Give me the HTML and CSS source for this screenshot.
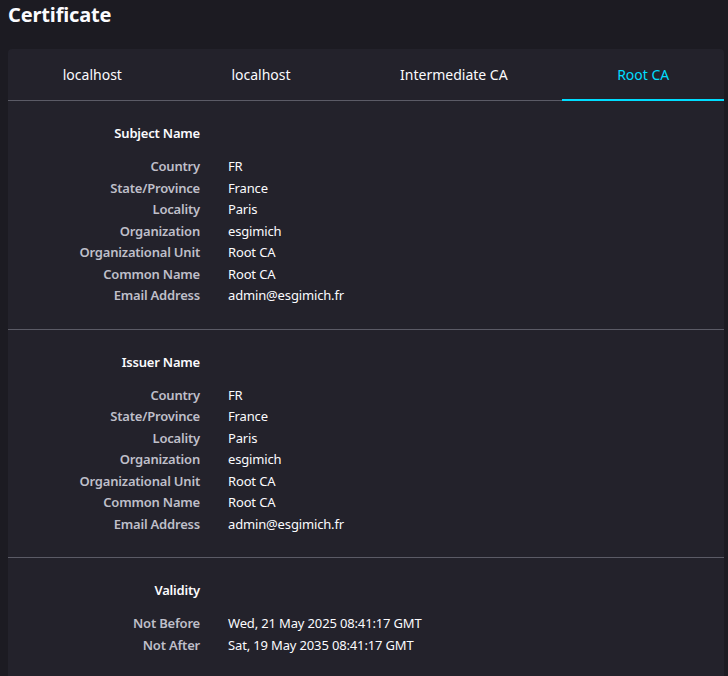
FILE: index.html
```html
<!DOCTYPE html>
<html lang="en">
<head>
<meta charset="utf-8">
<title>Certificate</title>
<link rel="stylesheet" href="styles.css">
</head>
<body>
<h1 class="title">Certificate</h1>
<div class="card">
  <div class="tabs">
    <div class="tab">localhost</div>
    <div class="tab">localhost</div>
    <div class="tab">Intermediate CA</div>
    <div class="tab active">Root CA</div>
  </div>
  <section class="section">
    <div class="row head"><div class="label">Subject Name</div><div class="value"></div></div>
    <div class="row"><div class="label">Country</div><div class="value">FR</div></div>
    <div class="row"><div class="label">State/Province</div><div class="value">France</div></div>
    <div class="row"><div class="label">Locality</div><div class="value">Paris</div></div>
    <div class="row"><div class="label">Organization</div><div class="value">esgimich</div></div>
    <div class="row"><div class="label">Organizational Unit</div><div class="value">Root CA</div></div>
    <div class="row"><div class="label">Common Name</div><div class="value">Root CA</div></div>
    <div class="row"><div class="label">Email Address</div><div class="value">admin@esgimich.fr</div></div>
  </section>
  <section class="section">
    <div class="row head"><div class="label">Issuer Name</div><div class="value"></div></div>
    <div class="row"><div class="label">Country</div><div class="value">FR</div></div>
    <div class="row"><div class="label">State/Province</div><div class="value">France</div></div>
    <div class="row"><div class="label">Locality</div><div class="value">Paris</div></div>
    <div class="row"><div class="label">Organization</div><div class="value">esgimich</div></div>
    <div class="row"><div class="label">Organizational Unit</div><div class="value">Root CA</div></div>
    <div class="row"><div class="label">Common Name</div><div class="value">Root CA</div></div>
    <div class="row"><div class="label">Email Address</div><div class="value">admin@esgimich.fr</div></div>
  </section>
  <section class="section">
    <div class="row head"><div class="label">Validity</div><div class="value"></div></div>
    <div class="row"><div class="label">Not Before</div><div class="value">Wed, 21 May 2025 08:41:17 GMT</div></div>
    <div class="row"><div class="label">Not After</div><div class="value">Sat, 19 May 2035 08:41:17 GMT</div></div>
  </section>
</div>
</body>
</html>
```
FILE: styles.css
```css
html, body {
  margin: 0;
  padding: 0;
  background: #1c1b22;
  color: #fbfbfe;
  font-family: "Noto Sans", sans-serif;
  height: 100%;
  overflow: hidden;
}
body {
  padding: 0 4px 0 8px;
}
.title {
  margin: 0;
  padding-top: 2px;
  height: 47px;
  font-size: 20px;
  font-weight: 700;
  line-height: 26px;
  letter-spacing: -0.15px;
}
.card {
  background: #23222b;
  border-radius: 4px;
}
.tabs {
  display: flex;
  border-bottom: 1px solid #5b5b66;
  height: 51px;
}
.tab {
  flex: 1 1 auto;
  display: flex;
  align-items: center;
  justify-content: center;
  font-size: 14px;
  color: #fbfbfe;
  border-bottom: 2px solid transparent;
  margin-bottom: -1px;
}
.tab.active {
  color: #00ddff;
  border-bottom-color: #00ddff;
}
.section {
  padding: 22px 0;
  border-bottom: 1px solid #5b5b66;
}
.row {
  display: flex;
  gap: 28px;
  font-size: 13px;
  line-height: 21.5px;
  letter-spacing: -0.15px;
}
.row.head {
  margin-bottom: 11.5px;
}
.label {
  width: 192px;
  flex: none;
  text-align: right;
  font-weight: 600;
  color: #bfbfc9;
  letter-spacing: -0.2px;
}
.head .label {
  color: #fbfbfe;
}
.value {
  color: #fbfbfe;
}
```
